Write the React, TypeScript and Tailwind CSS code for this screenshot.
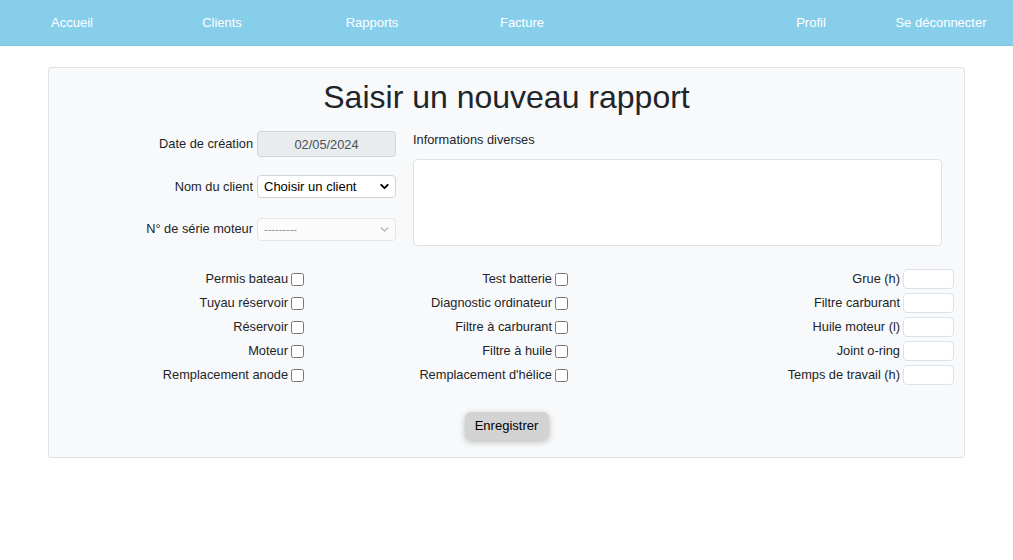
import { ChevronDown } from "lucide-react";

const navLeft = ["Accueil", "Clients", "Rapports", "Facture"];

const checksA = ["Permis bateau", "Tuyau réservoir", "Réservoir", "Moteur", "Remplacement anode"];
const checksB = [
  "Test batterie",
  "Diagnostic ordinateur",
  "Filtre à carburant",
  "Filtre à huile",
  "Remplacement d'hélice",
];
const fields = ["Grue (h)", "Filtre carburant", "Huile moteur (l)", "Joint o-ring", "Temps de travail (h)"];

const CheckRow = ({ label }: { label: string }) => (
  <label className="flex items-center justify-end h-[20px] gap-[3px]">
    <span>{label}</span>
    <input type="checkbox" className="m-0 w-[13px] h-[13px]" />
  </label>
);

const App = () => {
  return (
    <div className="min-h-[560px] bg-white text-[12.8px] text-[#212529] font-['Liberation_Sans',Arial,sans-serif]">
      <nav className="h-[46px] bg-[#87ceeb] border-b border-[#80c6e2] flex items-center justify-between text-white text-[13px]">
        <div className="flex -ml-[3px]">
          {navLeft.map((l) => (
            <a key={l} href="#" className="w-[150px] text-center">
              {l}
            </a>
          ))}
        </div>
        <div className="flex pr-[7px]">
          <a href="#" className="w-[130px] text-center">
            Profil
          </a>
          <a href="#" className="w-[130px] text-center">
            Se déconnecter
          </a>
        </div>
      </nav>

      <div className="mx-[48px] mt-[21px] w-[917px] bg-[#f8f9fa] border border-[#dee2e6] rounded-[3px] pt-[10px] pb-[17px]">
        <h1 className="text-[32px] leading-[38px] text-center">Saisir un nouveau rapport</h1>

        <div className="flex mt-[15px]">
          <div className="w-[347px] flex flex-col gap-[16.5px]">
            <div className="flex items-center justify-end gap-[4px] h-[26px]">
              <span>Date de création</span>
              <input
                disabled
                value="02/05/2024"
                readOnly
                className="w-[139px] h-[26px] rounded-[4px] border border-[#ced4da] bg-[#e9ecef] text-center text-[#495057]"
              />
            </div>
            <div className="flex items-center justify-end gap-[4px] h-[26px]">
              <span>Nom du client</span>
              <div className="relative w-[139px] h-[23px]">
                <select className="appearance-none w-full h-full rounded-[4px] border border-[#ced4da] bg-white pl-[6px] text-[13px] text-black">
                  <option>Choisir un client</option>
                </select>
                <ChevronDown
                  size={13}
                  strokeWidth={3.5}
                  className="absolute right-[5px] top-[5px] text-black pointer-events-none"
                />
              </div>
            </div>
            <div className="flex items-center justify-end gap-[4px] h-[26px]">
              <span>N° de série moteur</span>
              <div className="relative w-[139px] h-[23px]">
                <select
                  disabled
                  className="appearance-none w-full h-full rounded-[4px] border border-[#e3e5e8] bg-[#fbfbfb] pl-[6px] text-[11px] text-[#8a8a8a]"
                >
                  <option>---------</option>
                </select>
                <ChevronDown
                  size={13}
                  strokeWidth={2}
                  className="absolute right-[5px] top-[5px] text-[#a9a9a9] pointer-events-none"
                />
              </div>
            </div>
          </div>

          <div className="ml-[17px] w-[529px]">
            <div className="mt-[1px] h-[16px] leading-[16px]">Informations diverses</div>
            <textarea className="mt-[11px] block w-[529px] h-[87px] rounded-[4px] border border-[#dee2e6] bg-white resize-none" />
          </div>
        </div>

        <div className="flex mt-[23px]">
          <div className="w-[255px] flex flex-col gap-[4px]">
            {checksA.map((c) => (
              <CheckRow key={c} label={c} />
            ))}
          </div>
          <div className="w-[264px] flex flex-col gap-[4px]">
            {checksB.map((c) => (
              <CheckRow key={c} label={c} />
            ))}
          </div>
          <div className="w-[386px] flex flex-col gap-[4px]">
            {fields.map((f) => (
              <label key={f} className="flex items-center justify-end h-[20px] gap-[3px]">
                <span>{f}</span>
                <input className="w-[51px] h-[20px] rounded-[4px] border border-[#dee2e6] bg-white" />
              </label>
            ))}
          </div>
        </div>

        <div className="flex justify-center mt-[27px]">
          <button className="w-[84px] h-[28px] rounded-[6px] bg-[#d3d3d3] text-black text-[13px] shadow-[0_2px_6px_rgba(0,0,0,0.25)]">
            Enregistrer
          </button>
        </div>
      </div>
    </div>
  );
};

export default App;
